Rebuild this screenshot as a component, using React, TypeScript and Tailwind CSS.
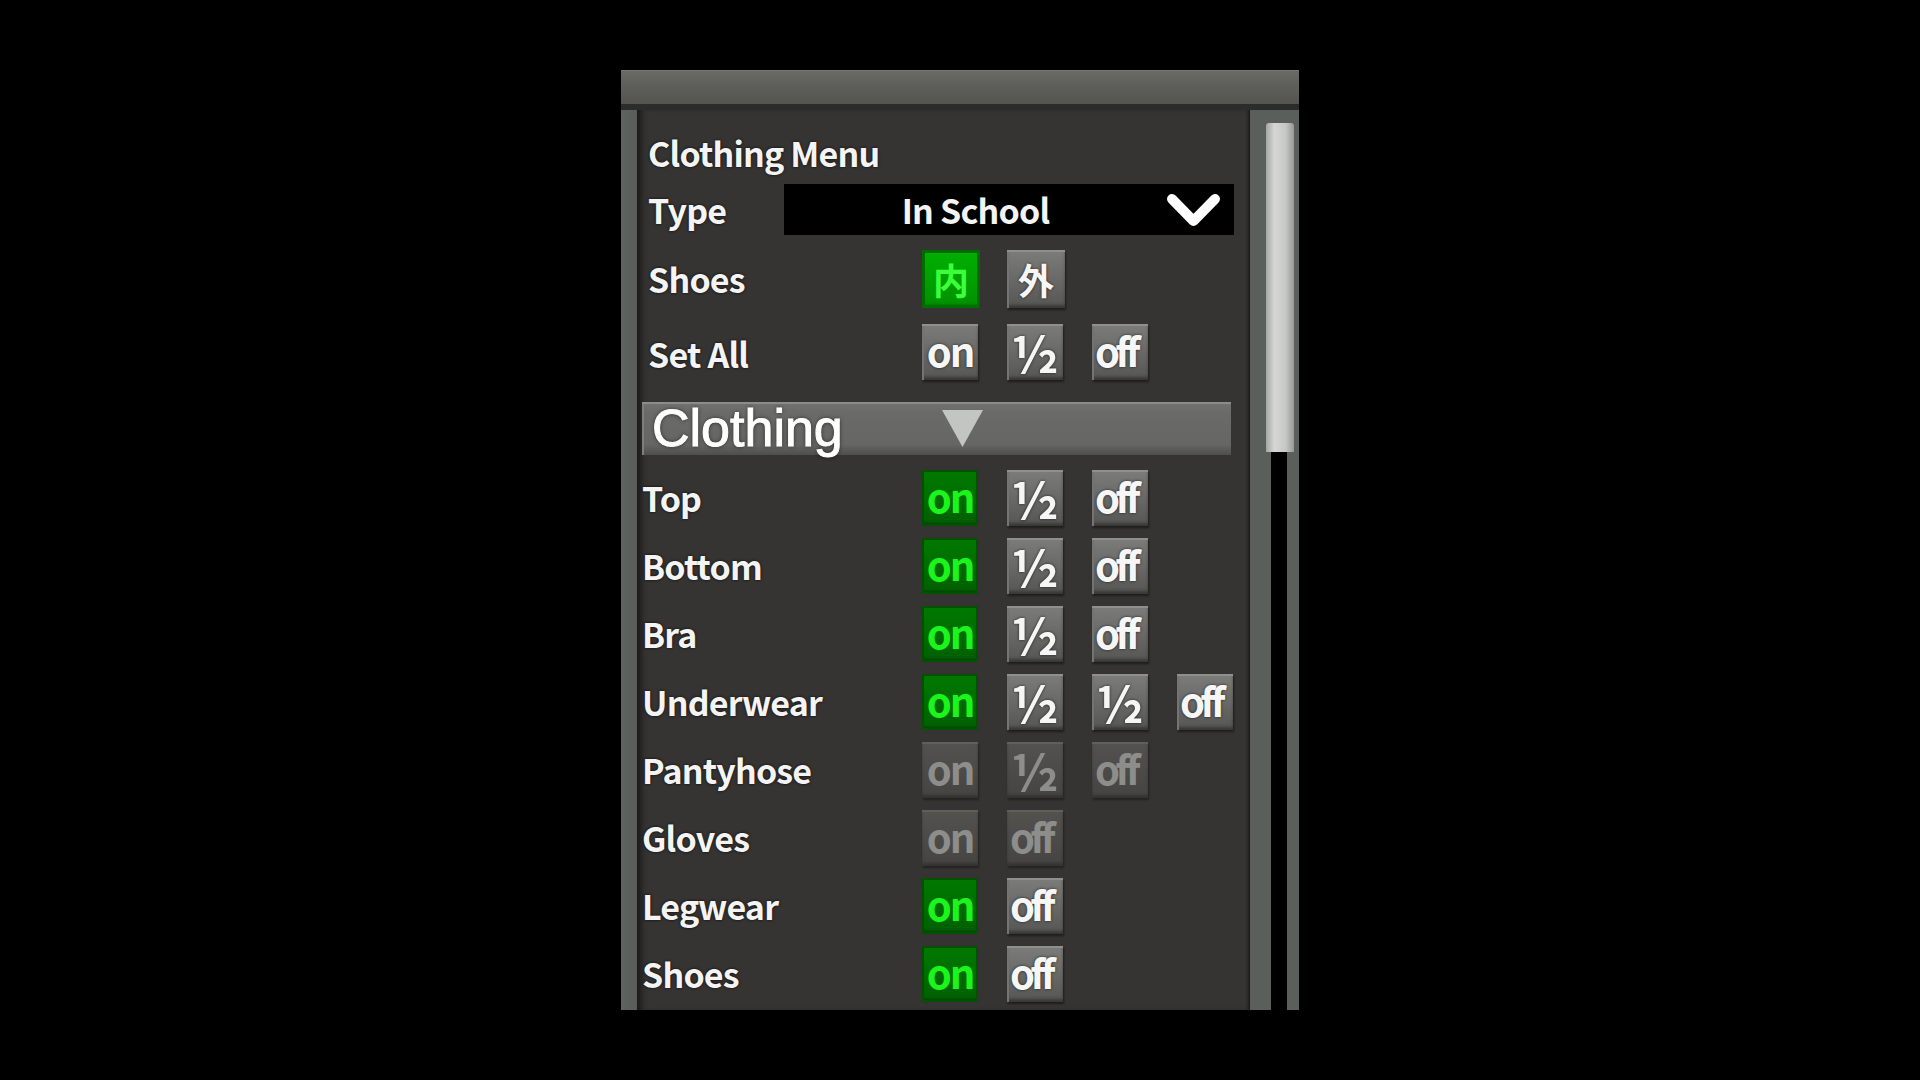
import React from "react";

type Kind = "on" | "gray" | "dis" | "cjkOn" | "cjkGray";

const labelFont = "[font-family:'Noto_Sans_CJK_JP','Noto_Sans',sans-serif]";

function Btn({ t, kind }: { t: string; kind: Kind }) {
  const base =
    "flex items-center justify-center font-bold leading-none overflow-visible whitespace-nowrap " +
    labelFont;
  let cls = "";
  if (kind === "on")
    cls =
      "bg-[linear-gradient(#007a00,#005f00)] text-[#1cf51c] shadow-[inset_0_0_0_2px_#005200,inset_0_-3px_3px_rgba(0,0,0,0.35)]";
  else if (kind === "cjkOn")
    cls =
      "bg-[linear-gradient(#00b000,#009000)] text-[#3cff3c] shadow-[inset_0_0_0_3px_#006c00,inset_0_-3px_3px_rgba(0,0,0,0.3)]";
  else if (kind === "gray" || kind === "cjkGray")
    cls =
      "bg-[linear-gradient(#7c7c7a,#656563_60%,#555553)] text-[#f6f6f6] shadow-[inset_0_2px_0_#8f8f8d,inset_2px_0_0_#747472,inset_0_-3px_3px_rgba(0,0,0,0.35),1px_2px_2px_rgba(0,0,0,0.45)] [text-shadow:0_0_3px_rgba(0,0,0,0.7)]";
  else
    cls =
      "bg-[linear-gradient(#53524f,#454442)] text-[#8d8d8b] shadow-[inset_0_2px_0_#5e5e5c,inset_0_-3px_3px_rgba(0,0,0,0.25),1px_2px_2px_rgba(0,0,0,0.35)]";
  let size = "w-[56px] h-[56px] text-[40px] tracking-[-2px] pb-[4px]";
  if (kind === "cjkOn" || kind === "cjkGray") size = "w-[58px] h-[58px] text-[36px] tracking-normal";
  else if (t === "½") size = "w-[56px] h-[56px] text-[50px] tracking-normal pb-[2px]";
  else if (t === "off") size = "w-[56px] h-[56px] text-[40px] tracking-[-4.5px] pr-[9px] pb-[4px]";
  return <div className={`${base} ${cls} ${size}`}>{t}</div>;
}

const labelCls =
  "text-[34px] font-bold text-[#f4f4f4] tracking-[-0.8px] leading-none whitespace-nowrap [text-shadow:0_0_3px_rgba(0,0,0,0.9)] " +
  labelFont;

function Row({ label, btns }: { label: string; btns: [string, Kind][] }) {
  return (
    <div className="h-[68px] flex items-center pl-[5px]">
      <div className={`w-[280px] ${labelCls}`}>{label}</div>
      <div className="flex gap-[29px]">
        {btns.map(([t, k], i) => (
          <Btn key={i} t={t} kind={k} />
        ))}
      </div>
    </div>
  );
}

export default function App() {
  const rows: [string, [string, Kind][]][] = [
    ["Top", [["on", "on"], ["½", "gray"], ["off", "gray"]]],
    ["Bottom", [["on", "on"], ["½", "gray"], ["off", "gray"]]],
    ["Bra", [["on", "on"], ["½", "gray"], ["off", "gray"]]],
    ["Underwear", [["on", "on"], ["½", "gray"], ["½", "gray"], ["off", "gray"]]],
    ["Pantyhose", [["on", "dis"], ["½", "dis"], ["off", "dis"]]],
    ["Gloves", [["on", "dis"], ["off", "dis"]]],
    ["Legwear", [["on", "on"], ["off", "gray"]]],
    ["Shoes", [["on", "on"], ["off", "gray"]]],
  ];
  return (
    <div className="w-[1920px] h-[1080px] bg-black flex items-center justify-center">
      <div className="w-[678px] h-[940px] flex flex-col">
        <div className="h-[34px] bg-[linear-gradient(#6a6b67,#5d5e5a_50%,#545551)] shadow-[inset_0_1px_0_#777874]" />
        <div className="h-[6px] bg-[#2c2c2a]" />
        <div className="flex-1 flex min-h-0">
          <div className="w-[16px] bg-[linear-gradient(90deg,#5f6360,#595d5a)]" />
          <div className="w-[613px] bg-[#363432] overflow-hidden shadow-[inset_8px_0_6px_-4px_rgba(0,0,0,0.55),inset_-4px_0_3px_-2px_rgba(0,0,0,0.5)] flex flex-col pt-[19px]">
            <div className="pl-[11px]">
              <div className={`h-[48px] flex items-center ${labelCls}`}>Clothing Menu</div>
              <div className="mt-[7px] h-[51px] flex items-center">
                <div className={`w-[136px] ${labelCls}`}>Type</div>
                <div className="w-[450px] h-[51px] bg-black flex items-center">
                  <div className={`w-[383px] text-center ${labelCls}`}>In School</div>
                  <svg width="53" height="32" viewBox="0 0 53 32">
                    <polyline
                      points="5,5 26.5,27 48,5"
                      fill="none"
                      stroke="#ffffff"
                      strokeWidth="10"
                      strokeLinecap="round"
                      strokeLinejoin="round"
                    />
                  </svg>
                </div>
              </div>
              <div className="mt-[8px] h-[72px] flex items-center">
                <div className={`w-[274px] ${labelCls}`}>Shoes</div>
                <div className="flex gap-[27px]">
                  <Btn t="内" kind="cjkOn" />
                  <Btn t="外" kind="cjkGray" />
                </div>
              </div>
              <div className="h-[74px] flex items-center">
                <div className={`w-[274px] ${labelCls} pt-[4px]`}>Set All</div>
                <div className="flex gap-[29px]">
                  <Btn t="on" kind="gray" />
                  <Btn t="½" kind="gray" />
                  <Btn t="off" kind="gray" />
                </div>
              </div>
            </div>
            <div className="mt-[13px] pl-[5px]">
              <div className="w-[589px] h-[53px] flex items-center pl-[10px] bg-[linear-gradient(#727270,#6a6a68_20%,#666664_80%,#4e4e4c)] shadow-[inset_0_2px_0_#8c8c8a,inset_2px_0_0_#7e7e7c]">
                <div className="w-[290px] text-[52px] leading-[53px] text-white [font-family:'Liberation_Sans',Arial,sans-serif] [-webkit-text-stroke:1px_#ffffff] [text-shadow:0_0_4px_rgba(0,0,0,0.7)] whitespace-nowrap">
                  Clothing
                </div>
                <svg width="41" height="37" viewBox="0 0 41 37">
                  <polygon points="0,0 41,0 20.5,37" fill="#c3c5c2" />
                </svg>
              </div>
            </div>
            <div className="mt-[9px]">
              {rows.map(([l, b]) => (
                <Row key={l} label={l} btns={b} />
              ))}
            </div>
          </div>
          <div className="w-[49px] bg-[#5b5f5c] flex flex-col pt-[13px] pl-[16px]">
            <div className="w-[28px] h-[329px] rounded-t-[3px] bg-[linear-gradient(90deg,#a3a6a3,#d6d7d4_30%,#c6c8c5_70%,#959895)]" />
            <div className="ml-[5px] w-[16px] flex-1 bg-black" />
          </div>
        </div>
      </div>
    </div>
  );
}
